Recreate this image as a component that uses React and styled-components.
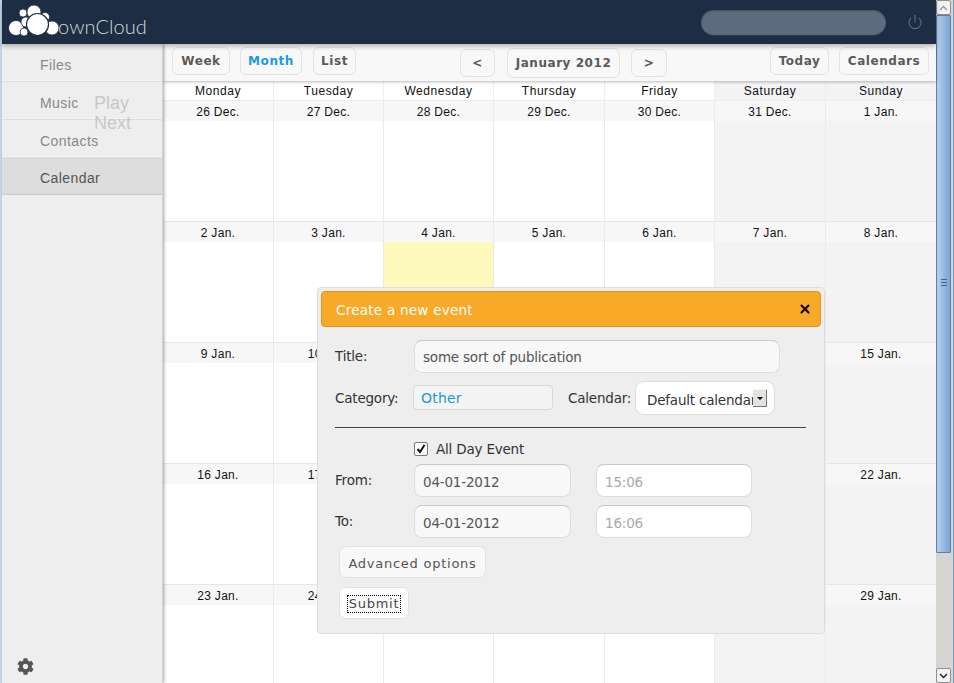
import React from "react";
import styled, { createGlobalStyle } from "styled-components";
import { Power, X } from "lucide-react";
import { FaCog } from "react-icons/fa";

const Global = createGlobalStyle`
  html, body { margin: 0; padding: 0; width: 954px; height: 683px; overflow: hidden; background: #fff; }
  * { box-sizing: border-box; }
`;

const Screen = styled.div`
  display: flex; width: 954px; height: 683px; position: relative; overflow: hidden;
  font-family: "DejaVu Sans", sans-serif;
  background: #fff;
`;
const WindowEdge = styled.div`width: 2px; flex: none; background: #c5dcec;`;
const Page = styled.div`width: 934px; flex: none; display: flex; flex-direction: column; height: 683px;`;

const Header = styled.header`
  height: 44px; flex: none; background: #1d2d44; display: flex; align-items: center; position: relative; z-index: 3;
  padding: 0 13px 0 6px; box-shadow: 0 2px 5px rgba(0,0,0,.3);
`;
const Logo = styled.div`display: flex; align-items: flex-end; height: 44px; position: relative; width: 150px;`;
const LogoText = styled.span`
  position: absolute; left: 50px; top: 13px;
  font-family: Lato, sans-serif; font-weight: 300; font-size: 20px; letter-spacing: .1px; color: #d4d9df; line-height: 26px;
`;
const Search = styled.div`
  margin-left: auto; width: 185px; height: 25px; border-radius: 13px; background: #5d6b7e;
  box-shadow: inset 0 1px 2px rgba(0,0,0,.25), 0 1px 0 rgba(255,255,255,.06);
`;
const PowerBtn = styled.div`margin-left: 21px; width: 16px; height: 16px; color: #5f6e81; display: flex;`;

const Body = styled.div`flex: 1; display: flex; min-height: 0;`;
const Sidebar = styled.nav`
  width: 161px; flex: none; background: #eee; display: flex; flex-direction: column; position: relative; z-index: 2;
  box-shadow: 1px 0 3px rgba(0,0,0,.35); border-right: 1px solid #d4d4d4;
`;
const NavItem = styled.div`
  height: ${p => p.$h}px; flex: none; padding: ${p => (p.$active ? 3 : 5)}px 0 0 38px; display: flex; align-items: center;
  font-family: "Liberation Sans", sans-serif; font-size: 14px; letter-spacing: .42px;
  color: ${p => (p.$active ? "#555" : "#888")};
  background: ${p => (p.$active ? "#ddd" : "#eee")};
  border-bottom: 1px solid ${p => (p.$active ? "#ccc" : "#ddd")};
  box-shadow: inset 0 -1px 0 ${p => (p.$active ? "#d8d8d8" : "#f4f4f4")};
`;
const PlayerControl = styled.span`
  position: absolute; left: 92px; top: ${p => p.$top}px;
  font-family: "Liberation Sans", sans-serif; font-size: 18px; line-height: 20px; color: #c8c8c8;
`;
const SettingsBtn = styled.div`position: absolute; left: 15px; bottom: 8px; width: 17px; height: 17px; color: #555; display: flex;`;

const Content = styled.main`flex: 1; min-width: 0; display: flex; flex-direction: column; position: relative;`;
const Toolbar = styled.div`
  height: 37px; flex: none; background: #f8f8f8; display: flex; padding-left: 9px; padding-right: 7px; position: relative; z-index: 1;
  box-shadow: 0 1px 3px rgba(0,0,0,.28);
`;
const ToolBtn = styled.div`
  height: ${p => p.$h || 28}px; width: ${p => p.$w}px; margin-left: ${p => p.$ml || 0}px; margin-top: ${p => p.$mt ?? 3}px; flex: none;
  display: flex; align-items: center; justify-content: center;
  font-size: 12px; font-weight: 700; letter-spacing: .55px; padding-bottom: 1px;
  color: ${p => (p.$active ? "#1b9be6" : "#5a5a5a")};
  background: #f8f8f8; border: 1px solid #e3e3e3; border-radius: 6px;
`;

const Calendar = styled.div`
  flex: 1; display: grid; grid-template-columns: 110px 110px 110px 111px 110px 111px 111px; grid-template-rows: 20px repeat(5, 121px); overflow: hidden;
  font-family: "Liberation Sans", sans-serif; font-size: 12px; letter-spacing: .55px; color: #111;
`;
const DayName = styled.div`
  display: flex; align-items: center; justify-content: center; padding-top: 1px;
  background: ${p => (p.$weekend ? "#f3f3f3" : "#fff")}; border-left: ${p => (p.$first ? "0" : "1px solid #eee")}; border-bottom: 1px solid #eee;
`;
const Cell = styled.div`
  display: flex; flex-direction: column;
  background: ${p => (p.$weekend ? "#f3f3f3" : "#fff")}; border-left: ${p => (p.$first ? "0" : "1px solid #eaeaea")}; border-bottom: 1px solid #e6e6e6;
`;
const CellDate = styled.div`
  height: 20px; flex: none; display: flex; align-items: center; justify-content: center; padding-top: 2px; background: #f7f7f7; letter-spacing: .3px;
`;
const CellBody = styled.div`flex: 1; background: ${p => (p.$today ? "#fef9bd" : "transparent")};`;

const Scrollbar = styled.div`width: 17px; flex: none; background: #d6d4d0; display: flex; flex-direction: column;`;
const ScrollBtn = styled.div`
  width: 15px; height: 15px; flex: none; background: #f4f3f1; border: 1px solid #8f8f8f; border-radius: 2px; display: flex; align-items: center; justify-content: center; color: #333;
`;
const Thumb = styled.div`
  width: 15px; height: 538px; flex: none; border: 1px solid #5d7ea8; border-radius: 1px; background: linear-gradient(90deg, #b5d0ee, #8bb0dc 70%, #7fa5d4);
  display: flex; flex-direction: column; align-items: center; justify-content: center; gap: 2px; padding-bottom: 3px;
`;
const Grip = styled.span`width: 6px; height: 1px; background: #3f6596;`;
const Track = styled.div`flex: 1;`;
const RightEdge = styled.div`width: 1px; flex: none; background: #6aa0d0;`;

const Dialog = styled.div`
  position: absolute; left: 317px; top: 287px; width: 508px; height: 347px; z-index: 5;
  background: #eee; border: 1px solid #ddd; border-radius: 4px; padding: 3px; color: #333;
  font-size: 13.5px; letter-spacing: -.2px;
`;
const TitleBar = styled.div`
  height: 36px; background: #f8a928; border: 1px solid #e0951c; border-radius: 4px; display: flex; align-items: center; justify-content: space-between;
  padding: 1px 8px 0 14px; color: #fff; font-size: 13.5px; letter-spacing: .25px;
`;
const CloseBtn = styled.div`display: flex; color: #000; margin-bottom: 2px;`;
const Form = styled.div`display: flex; flex-direction: column; padding: 13px 14px 0 14px;`;
const Row = styled.div`display: flex; align-items: center; height: ${p => p.$h}px; margin-bottom: ${p => p.$mb || 0}px;`;
const Label = styled.label`width: ${p => p.$w || 79}px; flex: none; color: #333; margin-top: ${p => p.$mt || 0}px;`;
const TextField = styled.input`
  width: ${p => p.$w}px; height: 33px; flex: none; margin-left: ${p => p.$ml || 0}px; padding: ${p => p.$pt ?? 2}px 8px 0; outline: none;
  font: inherit; letter-spacing: inherit; color: ${p => (p.$time ? "#aaa" : "#555")};
  background: ${p => (p.$time ? "#fff" : "#f8f8f8")}; border: 1px solid #ddd; border-top-color: #c8c8c8; border-radius: 8px;
`;
const CategoryBox = styled.div`
  width: 140px; height: 25px; flex: none; margin: -1px 0 0 -1px; padding-left: 7px; display: flex; align-items: center;
  color: #1d97cf; font-size: 14px; letter-spacing: .2px; background: #f4f4f4; border: 1px solid #d8d8d8; border-radius: 4px;
`;
const SideLabel = styled.span`margin-left: 15px; flex: none; width: 67px; color: #333;`;
const SelectBox = styled.div`
  width: 140px; height: 34px; flex: none; padding: 4px 8px 0 11px; display: flex; align-items: center; position: relative; overflow: hidden;
  background: #fff; border: 1px solid #ddd; border-radius: 9px; color: #333; white-space: nowrap;
`;
const SelectText = styled.span`width: 106px; overflow: hidden; flex: none;`;
const SelectArrow = styled.span`
  width: 14px; height: 18px; flex: none; margin-top: -4px; background: #e4e2de; border-right: 1px solid #777; border-bottom: 1px solid #777; border-top: 1px solid #f8f8f8;
  display: flex; align-items: center; justify-content: center;
  &::after { content: ""; border: 3px solid transparent; border-top: 3px solid #000; border-bottom: 0; }
`;
const Divider = styled.hr`width: 471px; height: 1px; border: 0; background: #444; margin: 12px 0 13px;`;
const CheckRow = styled.div`display: flex; align-items: center; gap: 8px; margin-left: 79px; height: 16px; margin-bottom: 7px;`;
const CheckBox = styled.span`
  width: 14px; height: 14px; flex: none; background: #fff; border: 1px solid #777; border-radius: 2px; display: flex; align-items: center; justify-content: center;
`;
const ActionBtn = styled.div`
  width: ${p => p.$w}px; height: ${p => p.$h}px; margin-left: 4px; margin-top: ${p => p.$mt}px; display: flex; align-items: center; justify-content: center;
  font-size: 13px; letter-spacing: .75px; color: #555; padding-top: 2px;
  background: ${p => (p.$focus ? "#fff" : "#f8f8f8")}; border: 1px solid #e2e2e2; border-radius: 7px;
`;
const FocusRing = styled.span`outline: 1px dotted #000; padding: 0 1px; color: #444; line-height: 16px;`;

const days = ["Monday", "Tuesday", "Wednesday", "Thursday", "Friday", "Saturday", "Sunday"];
const weeks = [
  ["26 Dec.", "27 Dec.", "28 Dec.", "29 Dec.", "30 Dec.", "31 Dec.", "1 Jan."],
  ["2 Jan.", "3 Jan.", "4 Jan.", "5 Jan.", "6 Jan.", "7 Jan.", "8 Jan."],
  ["9 Jan.", "10 Jan.", "11 Jan.", "12 Jan.", "13 Jan.", "14 Jan.", "15 Jan."],
  ["16 Jan.", "17 Jan.", "18 Jan.", "19 Jan.", "20 Jan.", "21 Jan.", "22 Jan."],
  ["23 Jan.", "24 Jan.", "25 Jan.", "26 Jan.", "27 Jan.", "28 Jan.", "29 Jan."],
];

function CloudMark() {
  const puffs = [
    [8, 28, 7.5], [16, 32, 4], [15, 13, 4], [26, 12, 7], [37, 17, 4.5], [44, 28, 7], [18, 22, 5],
  ];
  return (
    <svg width="56" height="44" viewBox="0 0 56 44" style={{ position: "absolute", left: 0, top: 0 }}>
      {puffs.map(([cx, cy, r], i) => (
        <circle key={i} cx={cx} cy={cy} r={r} fill="#fff" stroke="#1d2d44" strokeWidth=".8" />
      ))}
      <circle cx="29.5" cy="24.5" r="11" fill="#fff" stroke="#1d2d44" strokeWidth="1.2" />
    </svg>
  );
}

export default function App() {
  return (
    <Screen>
      <Global />
      <WindowEdge />
      <Page>
        <Header>
          <Logo>
            <CloudMark />
            <LogoText>ownCloud</LogoText>
          </Logo>
          <Search />
          <PowerBtn><Power size={16} strokeWidth={1.6} /></PowerBtn>
        </Header>
        <Body>
          <Sidebar>
            <NavItem $h={38}>Files</NavItem>
            <NavItem $h={38}>Music</NavItem>
            <NavItem $h={38}>Contacts</NavItem>
            <NavItem $h={37} $active>Calendar</NavItem>
            <PlayerControl $top={49}>Play</PlayerControl>
            <PlayerControl $top={69}>Next</PlayerControl>
            <SettingsBtn><FaCog size={17} /></SettingsBtn>
          </Sidebar>
          <Content>
            <Toolbar>
              <ToolBtn $w={58}>Week</ToolBtn>
              <ToolBtn $w={62} $ml={10} $active>Month</ToolBtn>
              <ToolBtn $w={43} $ml={11}>List</ToolBtn>
              <ToolBtn $w={35} $ml={104} $mt={5}>&lt;</ToolBtn>
              <ToolBtn $w={113} $ml={12} $h={30} $mt={4}>January 2012</ToolBtn>
              <ToolBtn $w={36} $ml={11} $mt={5}>&gt;</ToolBtn>
              <ToolBtn $w={59} $ml={103}>Today</ToolBtn>
              <ToolBtn $w={90} $ml={10}>Calendars</ToolBtn>
            </Toolbar>
            <Calendar>
              {days.map((d, i) => <DayName key={d} $first={i === 0} $weekend={i > 4}>{d}</DayName>)}
              {weeks.map((w, wi) => w.map((d, i) => (
                <Cell key={d + wi} $first={i === 0} $weekend={i > 4}>
                  <CellDate>{d}</CellDate>
                  <CellBody $today={wi === 1 && i === 2} />
                </Cell>
              )))}
            </Calendar>
          </Content>
        </Body>
      </Page>
      <Scrollbar>
        <ScrollBtn>
          <svg width="9" height="6" viewBox="0 0 9 6"><path d="M1 5l3.5-3.5L8 5" fill="none" stroke="#999" strokeWidth="1.4" /></svg>
        </ScrollBtn>
        <Thumb><Grip /><Grip /><Grip /></Thumb>
        <Track />
        <ScrollBtn>
          <svg width="9" height="6" viewBox="0 0 9 6"><path d="M1 1l3.5 3.5L8 1" fill="none" stroke="#222" strokeWidth="1.4" /></svg>
        </ScrollBtn>
      </Scrollbar>
      <RightEdge />
      <Dialog>
        <TitleBar>
          <span>Create a new event</span>
          <CloseBtn><X size={14} strokeWidth={3.4} /></CloseBtn>
        </TitleBar>
        <Form>
          <Row $h={33} $mb={8}>
            <Label $mt={-1}>Title:</Label>
            <TextField $w={366} $pt={0} readOnly value="some sort of publication" />
          </Row>
          <Row $h={34}>
            <Label>Category:</Label>
            <CategoryBox>Other</CategoryBox>
            <SideLabel>Calendar:</SideLabel>
            <SelectBox>
              <SelectText>Default calendar</SelectText>
              <SelectArrow />
            </SelectBox>
          </Row>
          <Divider />
          <CheckRow>
            <CheckBox>
              <svg width="10" height="10" viewBox="0 0 10 10"><path d="M1.5 5l2.5 3L8.5 1" fill="none" stroke="#111" strokeWidth="2" /></svg>
            </CheckBox>
            <span>All Day Event</span>
          </CheckRow>
          <Row $h={33} $mb={8}>
            <Label $mt={-1}>From:</Label>
            <TextField $w={157} readOnly value="04-01-2012" />
            <TextField $w={156} $ml={25} $time readOnly value="15:06" />
          </Row>
          <Row $h={33}>
            <Label $mt={-1}>To:</Label>
            <TextField $w={157} readOnly value="04-01-2012" />
            <TextField $w={156} $ml={25} $time readOnly value="16:06" />
          </Row>
          <ActionBtn $w={147} $h={32} $mt={8}>Advanced options</ActionBtn>
          <ActionBtn $w={70} $h={32} $mt={9} $focus><FocusRing>Submit</FocusRing></ActionBtn>
        </Form>
      </Dialog>
    </Screen>
  );
}
